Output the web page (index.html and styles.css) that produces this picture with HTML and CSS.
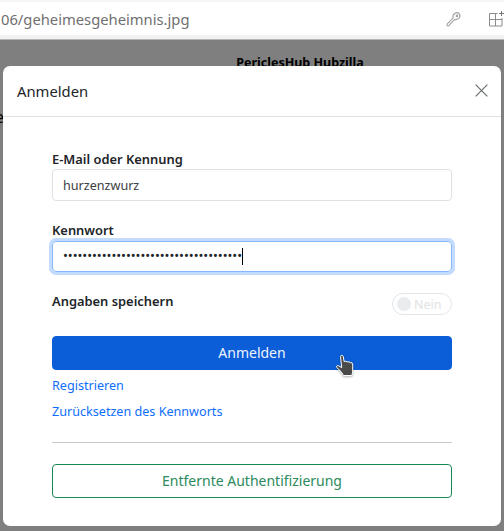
FILE: index.html
```html
<!DOCTYPE html>
<html>
<head>
    <meta charset="utf-8">
    <title>Anmelden</title>
    <link rel="stylesheet" href="styles.css">
</head>
<body>
    <!-- browser toolbar -->
    <div class="toolbar">
        <span class="url">06/geheimesgeheimnis.jpg</span>
        <svg class="icon-key" width="16" height="16" viewBox="0 0 16 16" fill="none" stroke="#a2a2a2" stroke-width="1.1">
            <path d="M1.500 12.600 7 7.100C6.500 5 7.400 3.300 9 2.300c1.600-.9 3.400-.6 4.300.5.9 1.200.8 3-.3 4.300-1.200 1.300-2.700 1.800-4.500 1.400L3.700 13.500l-.7 1.300-1.300.2-.7-.9z"/>
            <circle cx="11" cy="4.800" r=".8"/>
        </svg>
        <svg class="icon-grid" width="17" height="16" viewBox="0 0 17 16" fill="none" stroke="#8c8c8c" stroke-width="1">
            <path d="M9.500 2.500H1.500v12.500h12.500V7M1.500 8.500h12.500M7.500 2.500v12.500"/>
            <path d="M13.500 0v5M11 2.500h5" stroke="#777"/>
        </svg>
    </div>

    <!-- page behind the dialog -->
    <div class="backdrop">
        <div class="site-name">PericlesHub Hubzilla</div>
        <div class="site-cut">e</div>
    </div>

    <div class="modal">
        <div class="modal-header">
            <span class="modal-title">Anmelden</span>
            <svg class="close" width="13" height="13" viewBox="0 0 14 14" stroke="#6a6d70" stroke-width="1.300" fill="none">
                <path d="M.7.7l12.600 12.600M13.300.7.7 13.300"/>
            </svg>
        </div>
        <div class="modal-body">
            <div class="label">E-Mail oder Kennung</div>
            <div class="field">hurzenzwurz</div>

            <div class="label label-pass">Kennwort</div>
            <div class="field field-focus"><span class="dots">•••••••••••••••••••••••••••••••••••••</span><span class="caret"></span></div>

            <div class="remember">
                <span class="label">Angaben speichern</span>
                <span class="toggle"><span class="knob"></span>Nein</span>
            </div>

            <div class="btn btn-primary">Anmelden</div>
            <a class="link link-first" href="#">Registrieren</a>
            <a class="link" href="#">Zurücksetzen des Kennworts</a>
            <div class="rule"></div>
            <div class="btn btn-outline">Entfernte Authentifizierung</div>
        </div>
    </div>

    <!-- mouse pointer -->
    <svg class="hand" width="24" height="26" viewBox="0 0 24 26">
        <path d="M6.500 2.500c0-1.500 2.500-1.500 2.800 0l.8 5 1.700-.3 1.500.8 1.800-.2 1.400.9 1.500.1.700 1.300v8l-.9 3.400H9.500L7 17.500 2.800 13.600c-.9-1.100.3-2.500 1.700-1.900l3.200 1.900z" fill="#4a4a4a" stroke="#fff" stroke-width="1" stroke-linejoin="round"/>
    </svg>
</body>
</html>
```
FILE: styles.css
```css
html, body {
    margin: 0;
    height: 531px;
    overflow: hidden;
}

body {
    position: relative;
    display: flex;
    flex-direction: column;
    background: #7f7f7f;
    font-family: "Noto Sans", sans-serif;
    color: #212529;
}

.toolbar {
    display: flex;
    align-items: center;
    height: 33px;
    flex-shrink: 0;
    margin-top: 2px;
    background: white;
    border-bottom: 4px solid #f2f2f2;
    box-shadow: 0 -2px 0 #f5f5f5;
}

.url {
    flex: 1;
    padding-left: 1px;
    font-size: 14.750px;
    color: #6f6f6f;
}

.icon-key {
    margin-right: 26px;
}

.icon-grid {
    margin-right: -1px;
}

.backdrop {
    flex: 1;
    border-top: 1px solid #b5b5b5;
    background: #7f7f7f;
    color: black;
}

.site-name {
    margin-top: 14px;
    padding-left: 96px;
    text-align: center;
    font-size: 12.500px;
    font-weight: 700;
}

.site-cut {
    margin-top: 35px;
    margin-left: -5px;
    font-size: 16px;
}

/* dialog */
.modal {
    position: absolute;
    top: 66px;
    left: 3px;
    width: 498px;
    height: 460px;
    background: white;
    border-radius: 7px;
}

.modal-header {
    display: flex;
    justify-content: space-between;
    align-items: center;
    height: 50px;
    padding: 0 13px 0 14px;
    border-bottom: 1px solid #dee2e6;
}

.modal-title {
    font-size: 14.800px;
}

.close {
    margin-bottom: 1px;
}

.modal-body {
    padding: 34px 49px 0;
}

.label {
    font-size: 12.900px;
    font-weight: 600;
    line-height: 17px;
}

.field {
    display: flex;
    align-items: center;
    box-sizing: border-box;
    height: 32px;
    margin-top: 1px;
    padding: 0 10px;
    border: 1px solid #dee2e6;
    border-radius: 4px;
    font-size: 12.600px;
    color: #3c4043;
}

.label-pass {
    margin-top: 21px;
}

.field-focus {
    height: 31px;
    margin-top: 2px;
    border-color: #86b7fe;
    box-shadow: 0 0 0 3px #c2dbfe;
}

.dots {
    margin-bottom: 3px;
    font-size: 13px;
    letter-spacing: -0.050px;
    color: #212529;
}

.caret {
    width: 1px;
    height: 17px;
    margin-bottom: 1px;
    background: black;
}

.remember {
    display: flex;
    justify-content: space-between;
    align-items: flex-start;
    margin-top: 21px;
}

.toggle {
    display: flex;
    align-items: center;
    gap: 3px;
    box-sizing: border-box;
    width: 60px;
    height: 22px;
    padding-left: 4px;
    border: 1px solid #e2e5e8;
    border-radius: 11px;
    font-size: 12.500px;
    color: #dfe2e5;
}

.knob {
    width: 14px;
    height: 14px;
    border-radius: 50%;
    background: #e9ecef;
}

.btn {
    box-sizing: border-box;
    height: 34px;
    border-radius: 4px;
    text-align: center;
    font-size: 14px;
    line-height: 32px;
}

.btn-primary {
    margin-top: 21px;
    background: #0b5ed7;
    border: 1px solid #0b5ed7;
    color: #eef4fd;
}

.btn-outline {
    border: 1px solid #198754;
    color: #2c8a5c;
}

.link {
    display: block;
    margin-top: 8px;
    font-size: 12.600px;
    line-height: 18px;
    color: #0d6efd;
    text-decoration: none;
}

.link-first {
    margin-top: 7px;
}

.rule {
    height: 1px;
    margin: 21px 0;
    background: #c8c8c8;
}

.hand {
    position: absolute;
    top: 354px;
    left: 334px;
    filter: drop-shadow(0 1px 1px rgba(0, 0, 0, 0.3));
}
```
